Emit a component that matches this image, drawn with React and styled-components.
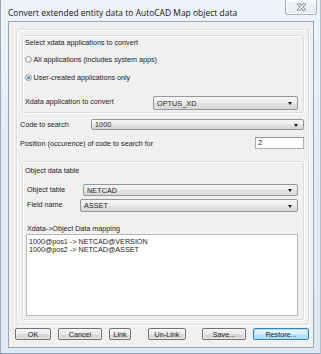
import React from 'react'
import styled, { createGlobalStyle, css } from 'styled-components'

const GlobalStyle = createGlobalStyle`
  html, body {
    margin: 0;
    padding: 0;
    background: #ffffff;
  }
  #root {
    width: 321px;
    height: 354px;
  }
`

const Window = styled.div`
  box-sizing: border-box;
  width: 321px;
  height: 354px;
  display: flex;
  flex-direction: column;
  border: 1px solid #9aa9ba;
  border-top: none;
  border-right-color: #b4c0cc;
  background: linear-gradient(180deg, #eef4fa 0%, #e3ecf6 40%, #dde8f3 100%);
  font-family: 'Liberation Sans', Arial, sans-serif;
  color: #222;
`

const TitleBar = styled.div`
  height: 21px;
  display: flex;
  justify-content: space-between;
  align-items: flex-start;
  padding-left: 7px;
`

const Title = styled.span`
  font-family: 'Open Sans', 'Liberation Sans', sans-serif;
  font-size: 8.4px;
  line-height: 9px;
  margin-top: 8px;
  color: #111;
  letter-spacing: 0.05px;
`

const CloseButton = styled.div`
  box-sizing: border-box;
  width: 32px;
  height: 15px;
  margin-right: 3px;
  display: flex;
  align-items: center;
  justify-content: center;
  border: 1px solid #a7b1bc;
  border-top: none;
  border-radius: 0 0 3px 3px;
  background: linear-gradient(180deg, #f3f6f9 0%, #e6ecf2 100%);
  box-shadow: inset 0 0 0 1px rgba(255, 255, 255, 0.7);
`

const Client = styled.div`
  box-sizing: border-box;
  width: 306px;
  height: 327px;
  margin-left: 7px;
  display: flex;
  flex-direction: column;
  border: 1px solid #9aa8b6;
  background: #f0f0f0;
`

const groupBox = css`
  box-sizing: border-box;
  display: flex;
  flex-direction: column;
  border: 1px solid #d5dfe5;
  border-radius: 3px;
  box-shadow: inset 1px 1px 0 #ffffff, 1px 1px 0 #ffffff;
`

const OuterGroup = styled.div`
  ${groupBox};
  width: 293px;
  height: 296px;
  margin: 7px 0 0 7px;
`

const Group = styled.div`
  ${groupBox};
  width: 282px;
  height: ${(p) => p.$h}px;
  margin: ${(p) => p.$top}px 0 0 5px;
`

const Caption = styled.div`
  font-size: 7.2px;
  line-height: 8px;
  height: 8px;
  white-space: nowrap;
  margin: ${(p) => p.$top}px 0 0 ${(p) => p.$left}px;
`

const RadioRow = styled.label`
  display: flex;
  align-items: center;
  gap: 1.5px;
  height: 9px;
  margin: ${(p) => p.$top}px 0 0 2px;
  font-size: 7.2px;
  white-space: nowrap;
`

const RadioDot = styled.span`
  box-sizing: border-box;
  width: 7px;
  height: 7px;
  border-radius: 50%;
  border: 1px solid #959aa0;
  background: radial-gradient(circle at 40% 35%, #ffffff 0%, #e3e3e3 80%);
  display: flex;
  align-items: center;
  justify-content: center;
  &::after {
    content: '';
    width: 3px;
    height: 3px;
    border-radius: 50%;
    background: ${(p) => (p.$checked ? 'radial-gradient(circle at 35% 35%, #7fb2e6, #1b4b86)' : 'transparent')};
  }
`

const Row = styled.div`
  display: flex;
  align-items: center;
  height: ${(p) => p.$h}px;
  margin: ${(p) => p.$top}px 0 0 ${(p) => p.$left}px;
`

const Label = styled.span`
  width: ${(p) => p.$w}px;
  flex: none;
  font-size: 7.2px;
  white-space: nowrap;
  margin-top: ${(p) => p.$dy || 0}px;
`

const Combo = styled.div`
  box-sizing: border-box;
  width: ${(p) => p.$w}px;
  height: 100%;
  display: flex;
  align-items: center;
  justify-content: space-between;
  padding: 0 5px 0 3px;
  border: 1px solid #959899;
  border-radius: 2px;
  background: linear-gradient(180deg, #f6f6f6 0%, #eeeeee 48%, #e2e2e2 52%, #d8d8d8 100%);
  font-size: 7.2px;
  letter-spacing: 0.1px;
`

const Arrow = styled.span`
  width: 0;
  height: 0;
  border-left: 2.5px solid transparent;
  border-right: 2.5px solid transparent;
  border-top: 3px solid #1a1a1a;
  margin-top: 1px;
`

const TextInput = styled.div`
  box-sizing: border-box;
  width: ${(p) => p.$w}px;
  height: 100%;
  padding-left: 2px;
  border: 1px solid #abadb3;
  border-top-color: #8f9296;
  background: #ffffff;
  font-size: 7.5px;
  line-height: 10px;
`

const ListBox = styled.div`
  box-sizing: border-box;
  width: 272px;
  height: 82px;
  margin: 1px 0 0 3px;
  padding: 3px 0 0 2px;
  border: 1px solid #b5b9be;
  background: #ffffff;
  font-size: 7.2px;
  line-height: 8px;
`

const ButtonBar = styled.div`
  display: flex;
  height: 12px;
  margin: 3px 0 0 6px;
`

const Button = styled.button`
  box-sizing: border-box;
  width: ${(p) => p.$w}px;
  height: 12px;
  margin-left: ${(p) => p.$gap}px;
  padding: 0;
  border: 1px solid #707070;
  border-radius: 2px;
  background: linear-gradient(180deg, #f3f3f3 0%, #ebebeb 48%, #dddddd 52%, #cfcfcf 100%);
  box-shadow: inset 0 0 0 1px rgba(255, 255, 255, 0.6);
  font-family: 'Liberation Sans', Arial, sans-serif;
  font-size: 7.2px;
  color: #222;
  ${(p) =>
    p.$default &&
    css`
      border-color: #3c7fb1;
      background: linear-gradient(180deg, #eaf6fd 0%, #d9f0fc 48%, #bee6fd 52%, #a7d9f5 100%);
      box-shadow: inset 0 0 0 1px #a6e2fb;
    `}
`

const buttons = [
  { text: 'OK', w: 36, gap: 0 },
  { text: 'Cancel', w: 44, gap: 7 },
  { text: 'Link', w: 22, gap: 7 },
  { text: 'Un-Link', w: 38, gap: 17 },
  { text: 'Save...', w: 44, gap: 16 },
  { text: 'Restore...', w: 56, gap: 7, isDefault: true },
]

const CloseGlyph = () => (
  <svg width="9" height="8" viewBox="0 0 9 8">
    <path d="M1.5 1 L7.5 7 M7.5 1 L1.5 7" stroke="#7a8189" strokeWidth="3" strokeLinecap="square" />
    <path d="M1.5 1 L7.5 7 M7.5 1 L1.5 7" stroke="#f4f6f8" strokeWidth="1.3" strokeLinecap="square" />
  </svg>
)

export default function App() {
  return (
    <>
      <GlobalStyle />
      <Window>
        <TitleBar>
          <Title>Convert extended entity data to AutoCAD Map object data</Title>
          <CloseButton>
            <CloseGlyph />
          </CloseButton>
        </TitleBar>
        <Client>
          <OuterGroup>
            <Group $top={5} $h={78}>
              <Caption $top={3} $left={2}>Select xdata applications to convert</Caption>
              <RadioRow $top={8}>
                <RadioDot />
                All applications (includes system apps)
              </RadioRow>
              <RadioRow $top={9}>
                <RadioDot $checked />
                User-created applications only
              </RadioRow>
              <Row $top={14} $left={2} $h={14}>
                <Label $w={128} $dy={-3}>Xdata application to convert</Label>
                <Combo $w={145}>
                  OPTUS_XD
                  <Arrow />
                </Combo>
              </Row>
            </Group>

            <Row $top={6} $left={3} $h={11}>
              <Label $w={71}>Code to search</Label>
              <Combo $w={213}>
                1000
                <Arrow />
              </Combo>
            </Row>
            <Row $top={7} $left={3} $h={12}>
              <Label $w={235}>Position (occurence) of code to search for</Label>
              <TextInput $w={49}>2</TextInput>
            </Row>

            <Group $top={12} $h={159}>
              <Caption $top={5} $left={2}>Object data table</Caption>
              <Row $top={9} $left={4} $h={12}>
                <Label $w={56} $dy={-2}>Object table</Label>
                <Combo $w={215}>
                  NETCAD
                  <Arrow />
                </Combo>
              </Row>
              <Row $top={3} $left={4} $h={13}>
                <Label $w={53} $dy={-2}>Field name</Label>
                <Combo $w={218}>
                  ASSET
                  <Arrow />
                </Combo>
              </Row>
              <Caption $top={13} $left={4}>Xdata-&gt;Object Data mapping</Caption>
              <ListBox>
                <div>1000@pos1 -&gt; NETCAD@VERSION</div>
                <div>1000@pos2 -&gt; NETCAD@ASSET</div>
              </ListBox>
            </Group>
          </OuterGroup>

          <ButtonBar>
            {buttons.map((b) => (
              <Button key={b.text} $w={b.w} $gap={b.gap} $default={b.isDefault}>
                {b.text}
              </Button>
            ))}
          </ButtonBar>
        </Client>
      </Window>
    </>
  )
}
